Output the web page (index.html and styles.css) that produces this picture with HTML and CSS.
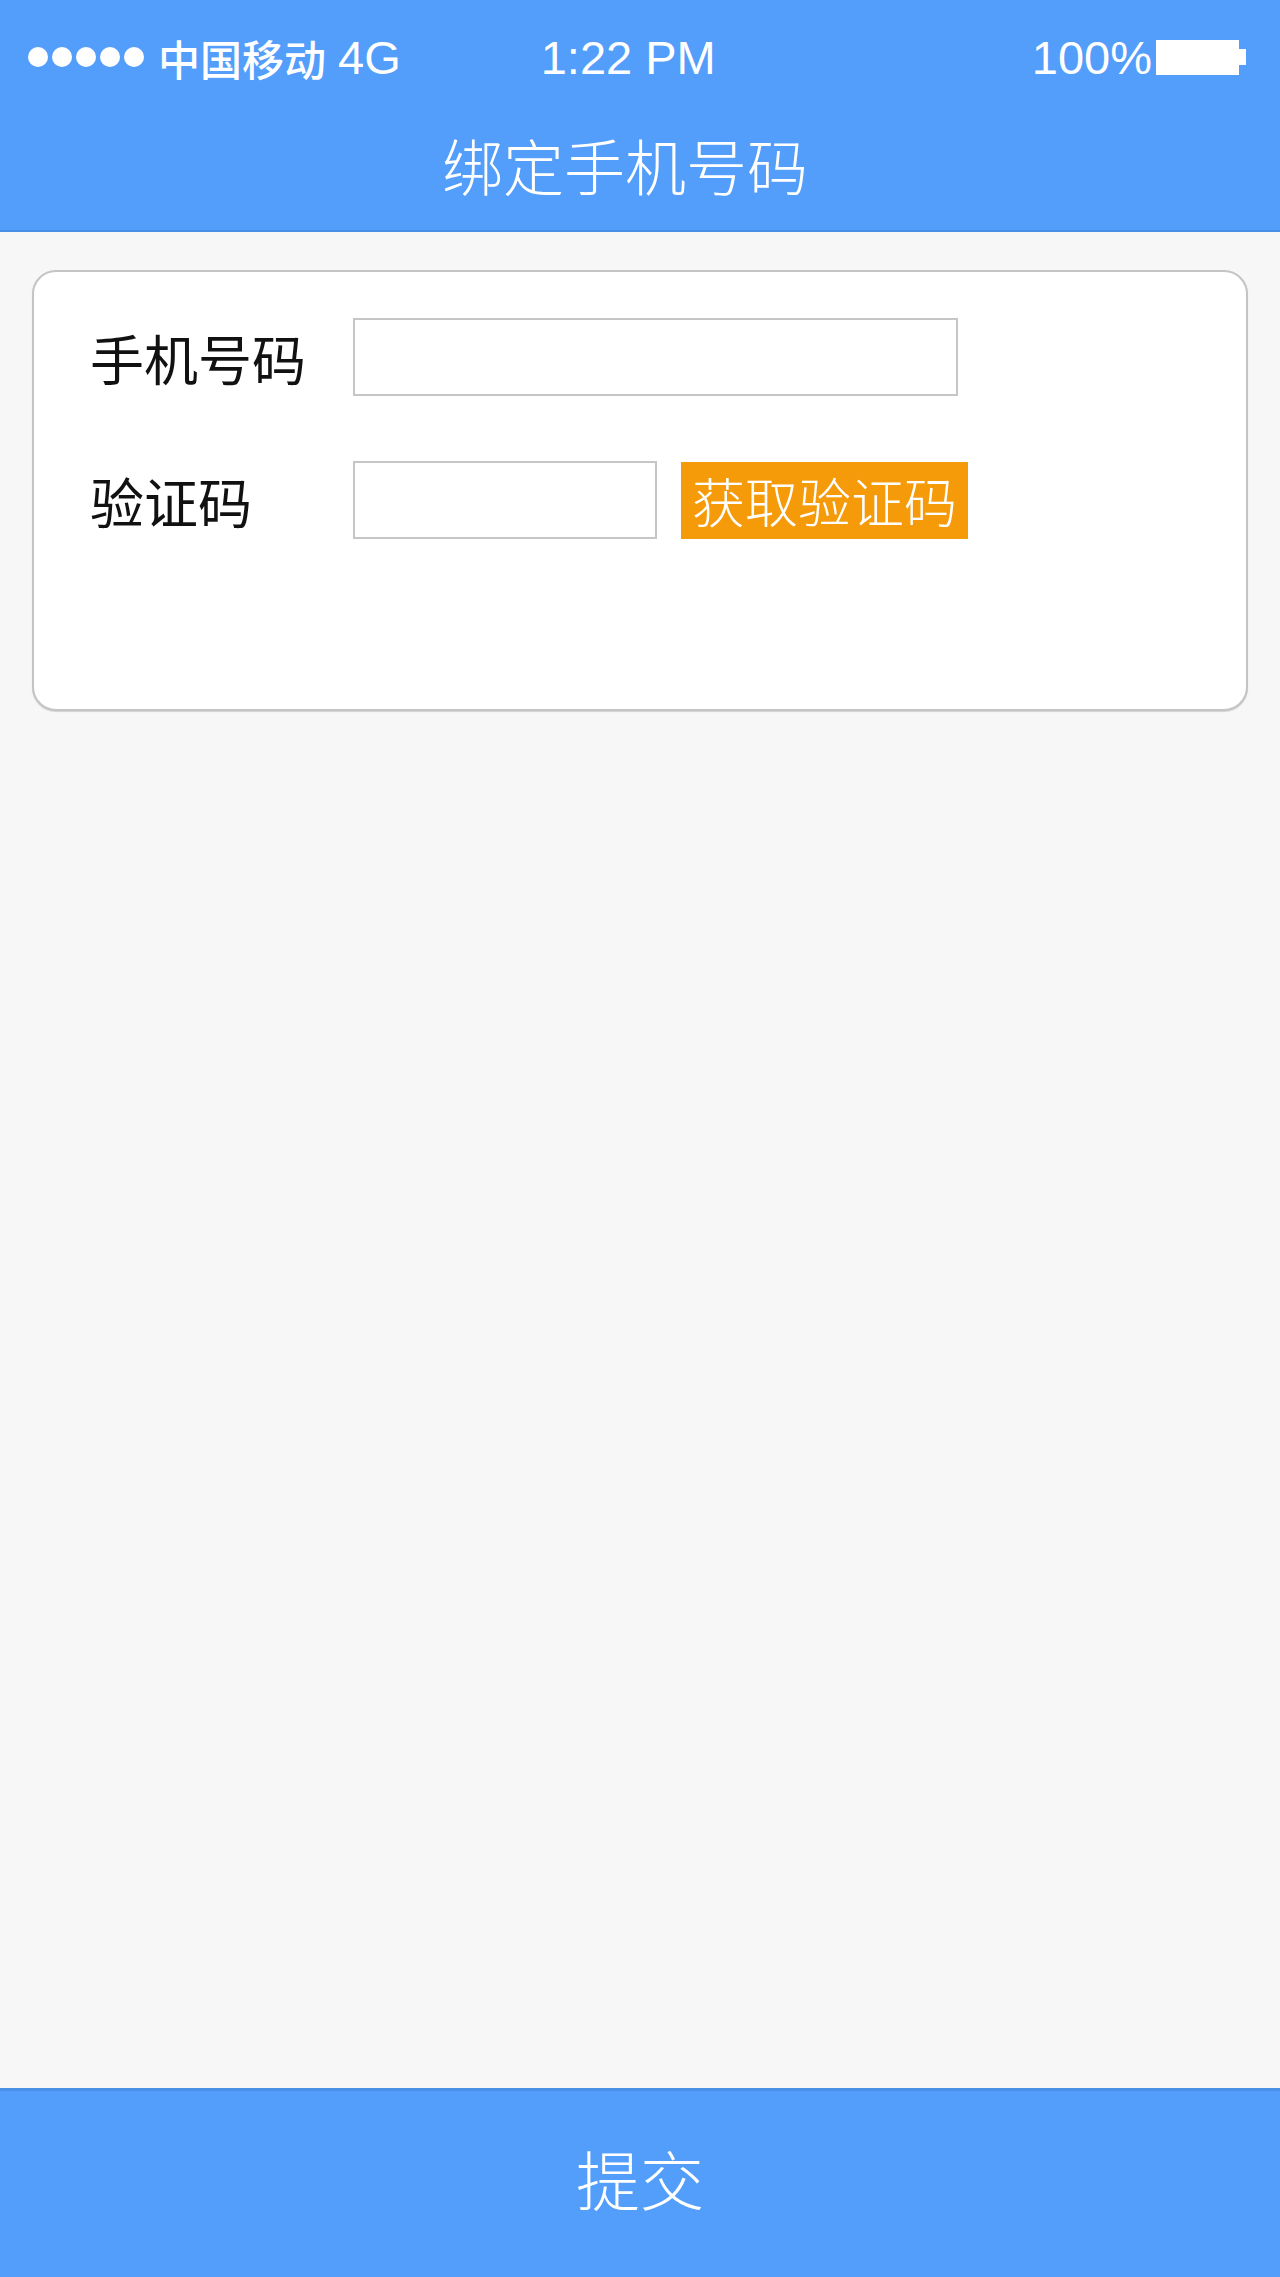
FILE: index.html
```html
<!DOCTYPE html>
<html lang="zh-CN">
  <head>
    <meta charset="UTF-8" />
    <meta name="viewport" content="width=device-width, initial-scale=1.0" />
    <title>绑定手机号码</title>
    <link rel="stylesheet" href="styles.css">
  </head>
  <body>
    <div class="page">
      <div class="header">
        <div class="status-bar">
          <div class="carrier">
            <span class="signal">
              <i></i><i></i><i></i><i></i><i></i>
            </span>
            <span class="carrier-name">中国移动</span>
            <span class="network">4G</span>
          </div>
          <div class="time">1:22 PM</div>
          <div class="battery">
            <span>100%</span>
            <span class="battery-body"></span>
            <span class="battery-nub"></span>
          </div>
        </div>
        <h1 class="title">绑定手机号码</h1>
      </div>

      <div class="content">
        <form class="bind-card" id="bindForm">
          <div class="form-row">
            <label for="phone">手机号码</label>
            <input type="text" id="phone" class="input-long" />
          </div>
          <div class="form-row">
            <label for="code">验证码</label>
            <input type="text" id="code" class="input-short" />
            <button type="button" class="code-btn">获取验证码</button>
          </div>
        </form>
      </div>

      <button type="submit" form="bindForm" class="submit-bar">提交</button>
    </div>
  </body>
</html>
```

FILE: styles.css
```css
/* Basic Reset */
* {
  margin: 0;
  padding: 0;
  box-sizing: border-box;
}

body {
  background-color: #f7f7f7;
  font-family: "Liberation Sans", "Noto Sans CJK SC", sans-serif;
}

.page {
  display: flex;
  flex-direction: column;
  min-height: 100vh;
}

/* Header */
.header {
  height: 232px;
  background-color: #539dfb;
  border-bottom: 2px solid #4a8fe6;
  color: #fff;
}

.status-bar {
  display: flex;
  align-items: center;
  height: 114px;
  padding: 0 34px 0 28px;
  font-size: 47px;
}

.carrier {
  display: flex;
  align-items: center;
}

.carrier-name {
  margin-left: 14px;
  font-family: "Noto Sans CJK SC", sans-serif;
  font-weight: 500;
  font-size: 42px;
}

.network {
  margin-left: 12px;
}

.signal {
  display: flex;
  gap: 4px;
}

.signal i {
  width: 20px;
  height: 20px;
  border-radius: 50%;
  background-color: #fff;
}

.time {
  margin-left: 140px;
}

.battery {
  display: flex;
  align-items: center;
  margin-left: auto;
}

.battery-body {
  width: 83px;
  height: 35px;
  margin-left: 4px;
  background-color: #fff;
}

.battery-nub {
  width: 7px;
  height: 16px;
  background-color: #fff;
}

.title {
  padding-right: 30px;
  text-align: center;
  font-family: "Noto Sans CJK SC", sans-serif;
  font-weight: 300;
  font-size: 61px;
  line-height: 102px;
}

/* Card */
.content {
  flex: 1;
  padding: 38px 32px;
}

.bind-card {
  height: 441px;
  padding: 46px 0 0 56px;
  background-color: #fff;
  border: 2px solid #c4c4c4;
  border-radius: 24px;
  box-shadow: 0 1px 1px rgba(0, 0, 0, 0.15);
}

.form-row {
  display: flex;
  align-items: center;
  margin-bottom: 65px;
  height: 78px;
}

.form-row label {
  width: 263px;
  font-family: "Noto Sans CJK SC", sans-serif;
  font-size: 54px;
  color: #111;
}

.form-row input {
  height: 78px;
  border: 2px solid #c6c6c6;
  background-color: #fff;
}

.input-long {
  width: 605px;
}

.input-short {
  width: 304px;
}

.code-btn {
  width: 287px;
  height: 77px;
  margin-left: 24px;
  border: none;
  background-color: #f59b0a;
  color: #fff;
  font-family: "Noto Sans CJK SC", sans-serif;
  font-weight: 300;
  font-size: 53px;
  white-space: nowrap;
}

/* Bottom button */
.submit-bar {
  height: 189px;
  width: 100%;
  padding-bottom: 14px;
  border: none;
  border-top: 3px solid #4a8fe6;
  background-color: #539dfb;
  color: #fff;
  font-family: "Noto Sans CJK SC", sans-serif;
  font-weight: 300;
  font-size: 64px;
}
```
